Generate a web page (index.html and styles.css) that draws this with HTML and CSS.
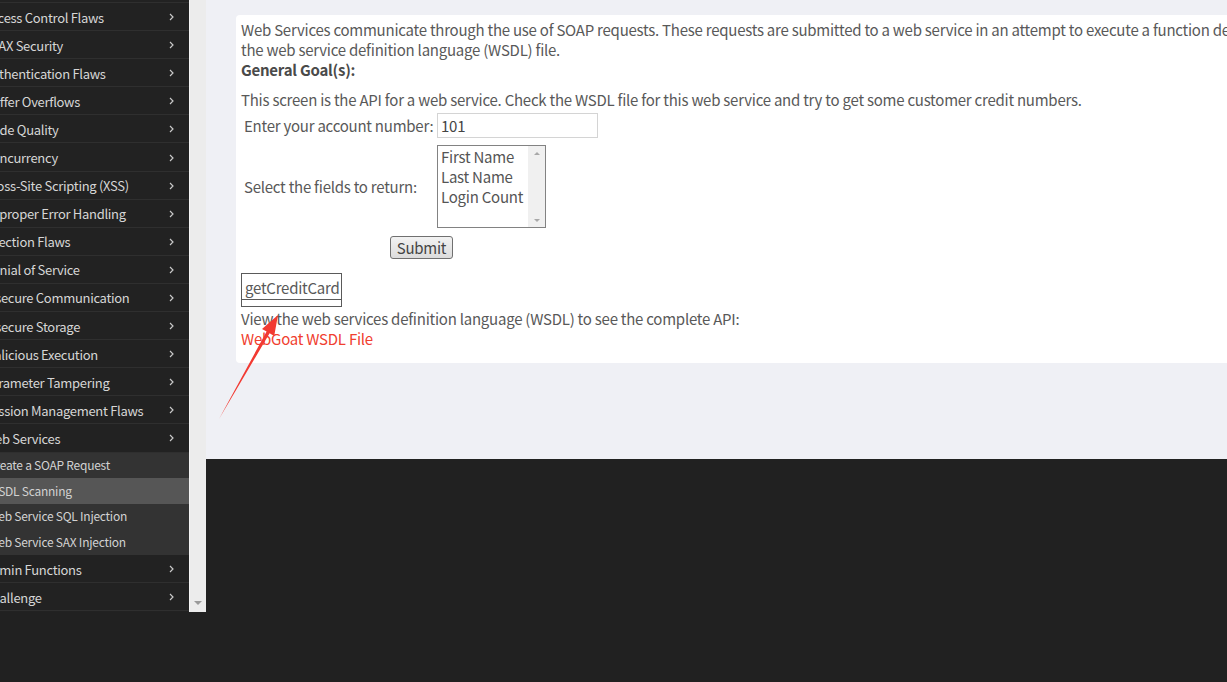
FILE: index.html
```html
<!DOCTYPE html>
<html>
<head>
<meta charset="utf-8">
<link rel="stylesheet" href="styles.css">
</head>
<body>
<aside class="sidebar">
  <ul class="nav">
    <li class="nav-item"><span class="nav-label">General</span><svg class="chev" viewBox="0 0 5 8"><polyline points="1,1 4,4 1,7"/></svg></li>
    <li class="nav-item"><span class="nav-label">Access Control Flaws</span><svg class="chev" viewBox="0 0 5 8"><polyline points="1,1 4,4 1,7"/></svg></li>
    <li class="nav-item"><span class="nav-label">AJAX Security</span><svg class="chev" viewBox="0 0 5 8"><polyline points="1,1 4,4 1,7"/></svg></li>
    <li class="nav-item"><span class="nav-label">Authentication Flaws</span><svg class="chev" viewBox="0 0 5 8"><polyline points="1,1 4,4 1,7"/></svg></li>
    <li class="nav-item"><span class="nav-label">Buffer Overflows</span><svg class="chev" viewBox="0 0 5 8"><polyline points="1,1 4,4 1,7"/></svg></li>
    <li class="nav-item"><span class="nav-label">Code Quality</span><svg class="chev" viewBox="0 0 5 8"><polyline points="1,1 4,4 1,7"/></svg></li>
    <li class="nav-item"><span class="nav-label">Concurrency</span><svg class="chev" viewBox="0 0 5 8"><polyline points="1,1 4,4 1,7"/></svg></li>
    <li class="nav-item"><span class="nav-label">Cross-Site Scripting (XSS)</span><svg class="chev" viewBox="0 0 5 8"><polyline points="1,1 4,4 1,7"/></svg></li>
    <li class="nav-item"><span class="nav-label">Improper Error Handling</span><svg class="chev" viewBox="0 0 5 8"><polyline points="1,1 4,4 1,7"/></svg></li>
    <li class="nav-item"><span class="nav-label">Injection Flaws</span><svg class="chev" viewBox="0 0 5 8"><polyline points="1,1 4,4 1,7"/></svg></li>
    <li class="nav-item"><span class="nav-label">Denial of Service</span><svg class="chev" viewBox="0 0 5 8"><polyline points="1,1 4,4 1,7"/></svg></li>
    <li class="nav-item"><span class="nav-label">Insecure Communication</span><svg class="chev" viewBox="0 0 5 8"><polyline points="1,1 4,4 1,7"/></svg></li>
    <li class="nav-item"><span class="nav-label">Insecure Storage</span><svg class="chev" viewBox="0 0 5 8"><polyline points="1,1 4,4 1,7"/></svg></li>
    <li class="nav-item"><span class="nav-label">Malicious Execution</span><svg class="chev" viewBox="0 0 5 8"><polyline points="1,1 4,4 1,7"/></svg></li>
    <li class="nav-item"><span class="nav-label">Parameter Tampering</span><svg class="chev" viewBox="0 0 5 8"><polyline points="1,1 4,4 1,7"/></svg></li>
    <li class="nav-item"><span class="nav-label">Session Management Flaws</span><svg class="chev" viewBox="0 0 5 8"><polyline points="1,1 4,4 1,7"/></svg></li>
    <li class="nav-item"><span class="nav-label">Web Services</span><svg class="chev" viewBox="0 0 5 8"><polyline points="1,1 4,4 1,7"/></svg></li>
    <li class="sub">
      <div class="sub-item"><span class="sub-label">Create a SOAP Request</span></div>
      <div class="sub-item active"><span class="sub-label">WSDL Scanning</span></div>
      <div class="sub-item"><span class="sub-label">Web Service SQL Injection</span></div>
      <div class="sub-item"><span class="sub-label">Web Service SAX Injection</span></div>
    </li>
    <li class="nav-item"><span class="nav-label">Admin Functions</span><svg class="chev" viewBox="0 0 5 8"><polyline points="1,1 4,4 1,7"/></svg></li>
    <li class="nav-item"><span class="nav-label">Challenge</span><svg class="chev" viewBox="0 0 5 8"><polyline points="1,1 4,4 1,7"/></svg></li>
  </ul>
  <div class="scrollbar"><span class="sb-down"></span></div>
</aside>

<main class="main">
  <section class="lesson">
    <div class="intro">Web Services communicate through the use of SOAP requests. These requests are submitted to a web service in an attempt to execute a function defined in<br>the web service definition language (WSDL) file.</div>
    <div class="goal-title">General Goal(s):</div>
    <p class="goal">This screen is the API for a web service. Check the WSDL file for this web service and try to get some customer credit numbers.</p>
    <div class="form">
      <label class="lbl">Enter your account number:</label>
      <div class="field"><span class="input">101</span></div>
      <label class="lbl">Select the fields to return:</label>
      <div class="field">
        <div class="listbox">
          <div class="options">
            <div class="opt">First Name</div>
            <div class="opt">Last Name</div>
            <div class="opt">Login Count</div>
          </div>
          <div class="lb-scroll"><span class="lb-up"></span><span class="lb-down"></span></div>
        </div>
      </div>
      <div class="submit-row"><button class="btn">Submit</button></div>
    </div>
    <div class="op-table">
      <div class="op-row">getCreditCard</div>
      <div class="op-empty"></div>
    </div>
    <div class="wsdl-note">View the web services definition language (WSDL) to see the complete API:</div>
    <a class="wsdl-link" href="#">WebGoat WSDL File</a>
  </section>
</main>

<svg class="annot" viewBox="0 0 1227 682" width="1227" height="682">
  <polygon points="219,419 266.6,331.4 262,328.9 278,315 274.2,335.9 269.6,333.2" fill="#f23a32"/>
</svg>
</body>
</html>
```

FILE: styles.css
```css
html, body {
  margin: 0;
  padding: 0;
  height: 100%;
}
body {
  background: #212121;
  display: flex;
  align-items: flex-start;
  overflow: hidden;
  position: relative;
  font-family: "Noto Sans CJK SC", "Noto Sans", sans-serif;
}

/* sidebar */
.sidebar {
  display: flex;
  width: 206px;
  height: 612px;
  flex-shrink: 0;
  overflow: hidden;
  background: #222222;
}
.nav {
  list-style: none;
  margin: -25.1px 0 0 0;
  padding: 0;
  width: 189px;
  overflow: hidden;
}
.nav-item {
  box-sizing: border-box;
  height: 28.1px;
  padding-top: 1px;
  display: flex;
  align-items: center;
  border-bottom: 1px solid #2f2f2f;
  color: #d6d6d6;
  font-size: 13px;
  letter-spacing: -0.3px;
  white-space: nowrap;
}
.nav-label {
  margin-left: -16px;
  flex: 1;
}
.chev {
  width: 5px;
  height: 8px;
  margin-right: 15px;
  fill: none;
  stroke: #c8c8c8;
  stroke-width: 1.2;
}
.sub {
  background: #333333;
}
.sub-item {
  box-sizing: border-box;
  height: 25.7px;
  padding-bottom: 2px;
  display: flex;
  align-items: center;
  color: #d2d2d2;
  font-size: 12px;
  letter-spacing: -0.25px;
  white-space: nowrap;
}
.sub-item.active {
  background: #565656;
}
.sub-label {
  margin-left: -12px;
}
.scrollbar {
  width: 17px;
  height: 612px;
  background: #ececec;
  border-left: 1px solid #f4f4f4;
  box-sizing: border-box;
  display: flex;
  flex-direction: column;
  justify-content: flex-end;
  align-items: center;
  padding-bottom: 7px;
}
.sb-down {
  width: 0;
  height: 0;
  border-left: 4px solid transparent;
  border-right: 4px solid transparent;
  border-top: 4px solid #9a9a9a;
}

/* main */
.main {
  flex: 1;
  height: 459px;
  background: #eff0f5;
  box-sizing: border-box;
  padding: 15px 0 0 30px;
  overflow: hidden;
}
.lesson {
  background: #ffffff;
  border-radius: 4px 0 0 4px;
  width: 1100px;
  box-sizing: border-box;
  padding: 5px 5px 14px 5px;
  color: #595959;
  font-size: 15px;
  letter-spacing: -0.24px;
  line-height: 20px;
}
.intro {
  white-space: nowrap;
}
.goal-title {
  font-weight: bold;
  color: #4a4a4a;
}
.goal {
  margin: 10px 0 0 0;
}
.form {
  display: grid;
  grid-template-columns: 196px 165px;
  grid-template-rows: 25px 83px 23px;
  row-gap: 7px;
  margin-top: 3px;
}
.lbl {
  padding-left: 3px;
  align-self: center;
  white-space: nowrap;
}
.field {
  align-self: center;
}
.input {
  display: block;
  box-sizing: border-box;
  width: 161px;
  height: 25px;
  border: 1px solid #d4d4d4;
  padding: 0 3px;
  line-height: 23px;
  color: #444;
}
.listbox {
  box-sizing: border-box;
  width: 109px;
  height: 83px;
  border: 1px solid #828282;
  display: flex;
}
.options {
  flex: 1;
  padding: 1px 0 0 3px;
  color: #555;
  white-space: nowrap;
}
.opt {
  height: 20px;
  line-height: 20px;
}
.lb-scroll {
  width: 17px;
  background: #f0f0f0;
  display: flex;
  flex-direction: column;
  justify-content: space-between;
  align-items: center;
  padding: 6px 0 5px;
}
.lb-up {
  width: 0;
  height: 0;
  border-left: 3px solid transparent;
  border-right: 3px solid transparent;
  border-bottom: 3px solid #a8a8a8;
}
.lb-down {
  width: 0;
  height: 0;
  border-left: 3px solid transparent;
  border-right: 3px solid transparent;
  border-top: 3px solid #a8a8a8;
}
.submit-row {
  grid-column: 1 / 3;
  display: flex;
  justify-content: center;
  margin-top: 1px;
}
.btn {
  box-sizing: border-box;
  width: 63px;
  height: 23px;
  padding: 0;
  border: 1px solid #707070;
  border-radius: 3px;
  background: linear-gradient(#f2f2f2, #dcdcdc);
  color: #444;
  font-family: inherit;
  font-size: 15px;
  letter-spacing: -0.24px;
  line-height: 20px;
}
.op-table {
  margin-top: 15px;
  width: 101px;
  box-sizing: border-box;
  border: 1px solid #5a5a5a;
}
.op-row {
  height: 26px;
  box-sizing: border-box;
  padding: 2px 0 0 3px;
  line-height: 24px;
  border-bottom: 1px solid #5a5a5a;
  white-space: nowrap;
}
.op-empty {
  height: 6px;
}
.wsdl-note {
  margin-top: 2px;
}
.wsdl-link {
  color: #f0402f;
  text-decoration: none;
}

/* annotation arrow over the screenshot */
.annot {
  position: absolute;
  top: 0;
  left: 0;
  pointer-events: none;
}
```
